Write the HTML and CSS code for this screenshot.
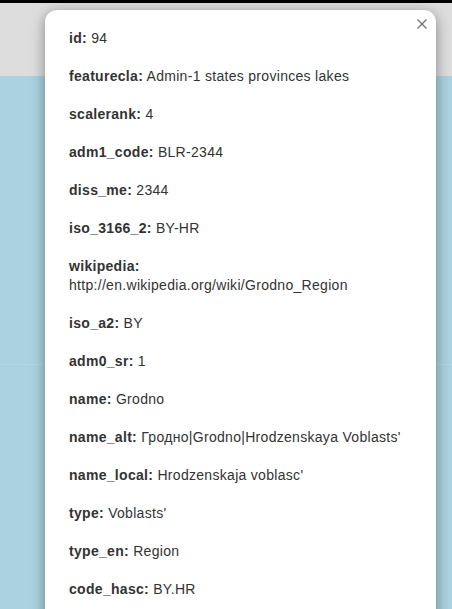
FILE: index.html
```html
<!DOCTYPE html>
<html lang="en">
<head>
<meta charset="utf-8">
<title>Popup</title>
<link rel="stylesheet" href="styles.css">
</head>
<body>
<div class="page">
  <div class="topline"></div>
  <div class="header"></div>
  <div class="map"></div>
</div>
<div class="popup">
  <button class="close" aria-label="Close">
    <svg width="10" height="10" viewBox="0 0 10 10"><path d="M0.5 0.5 L9.5 9.5 M9.5 0.5 L0.5 9.5" stroke="#757575" stroke-width="1.4" fill="none"/></svg>
  </button>
  <div class="content">
    <p><b>id:</b> 94</p>
    <p><b>featurecla:</b> Admin-1 states provinces lakes</p>
    <p><b>scalerank:</b> 4</p>
    <p><b>adm1_code:</b> BLR-2344</p>
    <p><b>diss_me:</b> 2344</p>
    <p><b>iso_3166_2:</b> BY-HR</p>
    <p><b>wikipedia:</b> http://en.wikipedia.org/wiki/Grodno_Region</p>
    <p><b>iso_a2:</b> BY</p>
    <p><b>adm0_sr:</b> 1</p>
    <p><b>name:</b> Grodno</p>
    <p><b>name_alt:</b> Гродно|Grodno|Hrodzenskaya Voblasts'</p>
    <p><b>name_local:</b> Hrodzenskaja voblasc'</p>
    <p><b>type:</b> Voblasts'</p>
    <p><b>type_en:</b> Region</p>
    <p><b>code_hasc:</b> BY.HR</p>
  </div>
</div>
</body>
</html>
```
FILE: styles.css
```css
html, body {
  margin: 0;
  padding: 0;
  height: 609px;
  overflow: hidden;
}
body {
  font-family: "Liberation Sans", Arial, Helvetica, sans-serif;
}
.page {
  display: flex;
  flex-direction: column;
  height: 609px;
}
.topline {
  height: 3px;
  background: #000;
}
.header {
  height: 73px;
  background: #dddddd;
}
.map {
  flex: 1;
  background: linear-gradient(#aad3df 0, #aad3df 288px, #b3d8e3 288px, #b3d8e3 289px, #aad3df 289px);
}
.popup {
  position: absolute;
  left: 45px;
  top: 10px;
  width: 391px;
  height: 700px;
  background: #fff;
  border-radius: 12px;
  box-shadow: 0 3px 14px rgba(0, 0, 0, 0.4);
}
.close {
  position: absolute;
  top: 9px;
  right: 9px;
  width: 10px;
  height: 10px;
  padding: 0;
  border: 0;
  background: none;
  display: flex;
}
.content {
  display: flex;
  flex-direction: column;
  gap: 19px;
  padding: 19px 24px;
  color: #333;
  font-size: 14px;
  line-height: 19px;
  letter-spacing: 0.3px;
}
.content p {
  margin: 0;
}
.content b {
  font-weight: bold;
}
```
